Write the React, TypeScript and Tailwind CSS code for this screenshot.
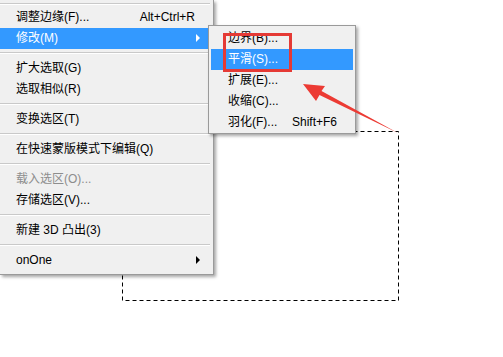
import React from "react";

const FONT = { fontFamily: "'Liberation Sans','Noto Sans CJK SC',sans-serif" };

function Sep() {
  return (
    <div className="h-[9px] pt-[3px] mr-[3px]">
      <div className="h-px bg-[#c9c9c9]" />
      <div className="h-px bg-white" />
    </div>
  );
}

function Arrow({ white }: { white?: boolean }) {
  return (
    <svg width="5" height="8" viewBox="0 0 5 8" className="absolute right-[9px] top-[6px]">
      <path d="M0 0 L4 4 L0 8 Z" fill={white ? "#ffffff" : "#000000"} />
    </svg>
  );
}

function Row({
  label,
  shortcut,
  active,
  disabled,
  sub,
}: {
  label: string;
  shortcut?: string;
  active?: boolean;
  disabled?: boolean;
  sub?: boolean;
}) {
  return (
    <div
      className={
        "relative h-[21px] mr-[3px] flex items-center pl-[16px] pr-[15px] text-[12px] leading-[21px] " +
        (active ? "bg-[#3399ff] text-white" : disabled ? "text-[#8d8d8d]" : "text-black")
      }
    >
      <span className="flex-1 whitespace-nowrap">{label}</span>
      {shortcut && <span className="whitespace-nowrap">{shortcut}</span>}
      {sub && <Arrow white={active} />}
    </div>
  );
}

function SubRow({ label, shortcut, active }: { label: string; shortcut?: string; active?: boolean }) {
  return (
    <div
      className={
        "h-[21px] mx-[2px] flex items-center pl-[17px] pr-[16px] text-[12px] leading-[21px] " +
        (active ? "bg-[#3399ff] text-white" : "text-black")
      }
    >
      <span className="flex-1 whitespace-nowrap">{label}</span>
      {shortcut && <span className="whitespace-nowrap">{shortcut}</span>}
    </div>
  );
}

export default function App() {
  return (
    <div className="relative w-[503px] h-[357px] bg-white overflow-hidden" style={FONT}>
      {/* selection marquee */}
      <svg className="absolute left-0 top-0" width="503" height="357">
        <rect
          x="122.5"
          y="131.5"
          width="276"
          height="169"
          fill="none"
          stroke="#000"
          strokeWidth="1"
          strokeDasharray="4 3"
        />
      </svg>

      {/* main menu */}
      <div className="absolute left-0 top-0 w-[214px] h-[275px] bg-[#f0f0f0] border-r border-b border-[#9a9a9a] shadow-[2px_2px_3px_rgba(0,0,0,0.35)] pt-[3px]">
        <div className="mr-[3px]">
          <div className="h-px bg-[#c9c9c9]" />
          <div className="h-px bg-white" />
        </div>
        <div className="h-[2px]" />
        <Row label="调整边缘(F)..." shortcut="Alt+Ctrl+R" />
        <Row label="修改(M)" active sub />
        <Sep />
        <Row label="扩大选取(G)" />
        <Row label="选取相似(R)" />
        <Sep />
        <Row label="变换选区(T)" />
        <Sep />
        <Row label="在快速蒙版模式下编辑(Q)" />
        <Sep />
        <Row label="载入选区(O)..." disabled />
        <Row label="存储选区(V)..." />
        <Sep />
        <Row label="新建 3D 凸出(3)" />
        <Sep />
        <Row label="onOne" sub />
      </div>

      {/* submenu */}
      <div className="absolute left-[208px] top-[25px] w-[148px] h-[109px] bg-[#f0f0f0] border border-[#9a9a9a] shadow-[2px_2px_3px_rgba(0,0,0,0.35)] pt-[2px]">
        <SubRow label="边界(B)..." />
        <SubRow label="平滑(S)..." active />
        <SubRow label="扩展(E)..." />
        <SubRow label="收缩(C)..." />
        <SubRow label="羽化(F)..." shortcut="Shift+F6" />
      </div>

      {/* red highlight box */}
      <div className="absolute left-[223px] top-[33px] w-[69px] h-[39px] border-[3px] border-[#e53a35]" />

      {/* red arrow */}
      <svg className="absolute left-0 top-0" width="503" height="357">
        <polygon
          points="303,84 325,86 321.5,91 398,133 319.5,95 316,101"
          fill="#ec3b34"
        />
      </svg>
    </div>
  );
}
